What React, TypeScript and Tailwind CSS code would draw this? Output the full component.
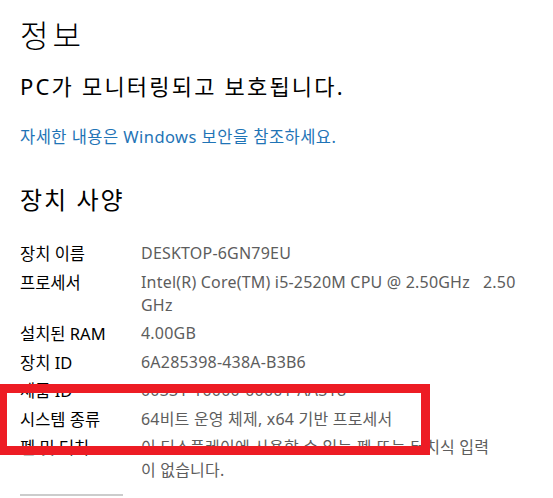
const rows: { label: string; lines: string[] }[] = [
  { label: '장치 이름', lines: ['DESKTOP-6GN79EU'] },
  { label: '프로세서', lines: ['Intel(R) Core(TM) i5-2520M CPU @ 2.50GHz   2.50', 'GHz'] },
  { label: '설치된 RAM', lines: ['4.00GB'] },
  { label: '장치 ID', lines: ['6A285398-438A-B3B6'] },
  { label: '제품 ID', lines: ['00331-10000-00001-AA318'] },
  { label: '시스템 종류', lines: ['64비트 운영 체제, x64 기반 프로세서'] },
  { label: '펜 및 터치', lines: ['이 디스플레이에 사용할 수 있는 펜 또는 터치식 입력', '이 없습니다.'] },
];

export default function App() {
  return (
    <div
      className="relative w-[553px] h-[498px] overflow-hidden bg-white text-black"
      style={{ fontFamily: '"Noto Sans", "Noto Sans CJK KR", sans-serif' }}
    >
      <div className="pl-5 pt-[15px]">
        <h1 className="text-[31px] font-light leading-[40px] tracking-[4px]">정보</h1>
        <p className="mt-[17px] text-[22px] leading-[28px] tracking-[2.2px]">PC가 모니터링되고 보호됩니다.</p>
        <p className="mt-[26px] text-[16.5px] leading-[22px] tracking-[0.45px] text-[#1f74b6]">
          자세한 내용은 Windows 보안을 참조하세요.
        </p>
        <h2 className="mt-[37px] text-[24px] leading-[30px] tracking-[2px]">장치 사양</h2>

        <div className="mt-[27px] flex flex-col gap-[5.5px] text-[16.5px] leading-[23px]">
          {rows.map((r) => (
            <div key={r.label} className="flex">
              <div className="w-[121px] shrink-0 text-black">{r.label}</div>
              <div className="flex flex-col text-[16px] tracking-[0.2px] text-[#5d5d5d]">
                {r.lines.map((l) => (
                  <span key={l} className="whitespace-pre">{l}</span>
                ))}
              </div>
            </div>
          ))}
        </div>

        <div className="mt-[12px] w-[103px] h-[2px] bg-[#cccccc]" />
      </div>

      {/* red highlight box drawn over the screenshot */}
      <div className="absolute left-[-2px] top-[384px] w-[432px] h-[71px] border-[9px] border-[#ed1c24]" />
    </div>
  );
}
